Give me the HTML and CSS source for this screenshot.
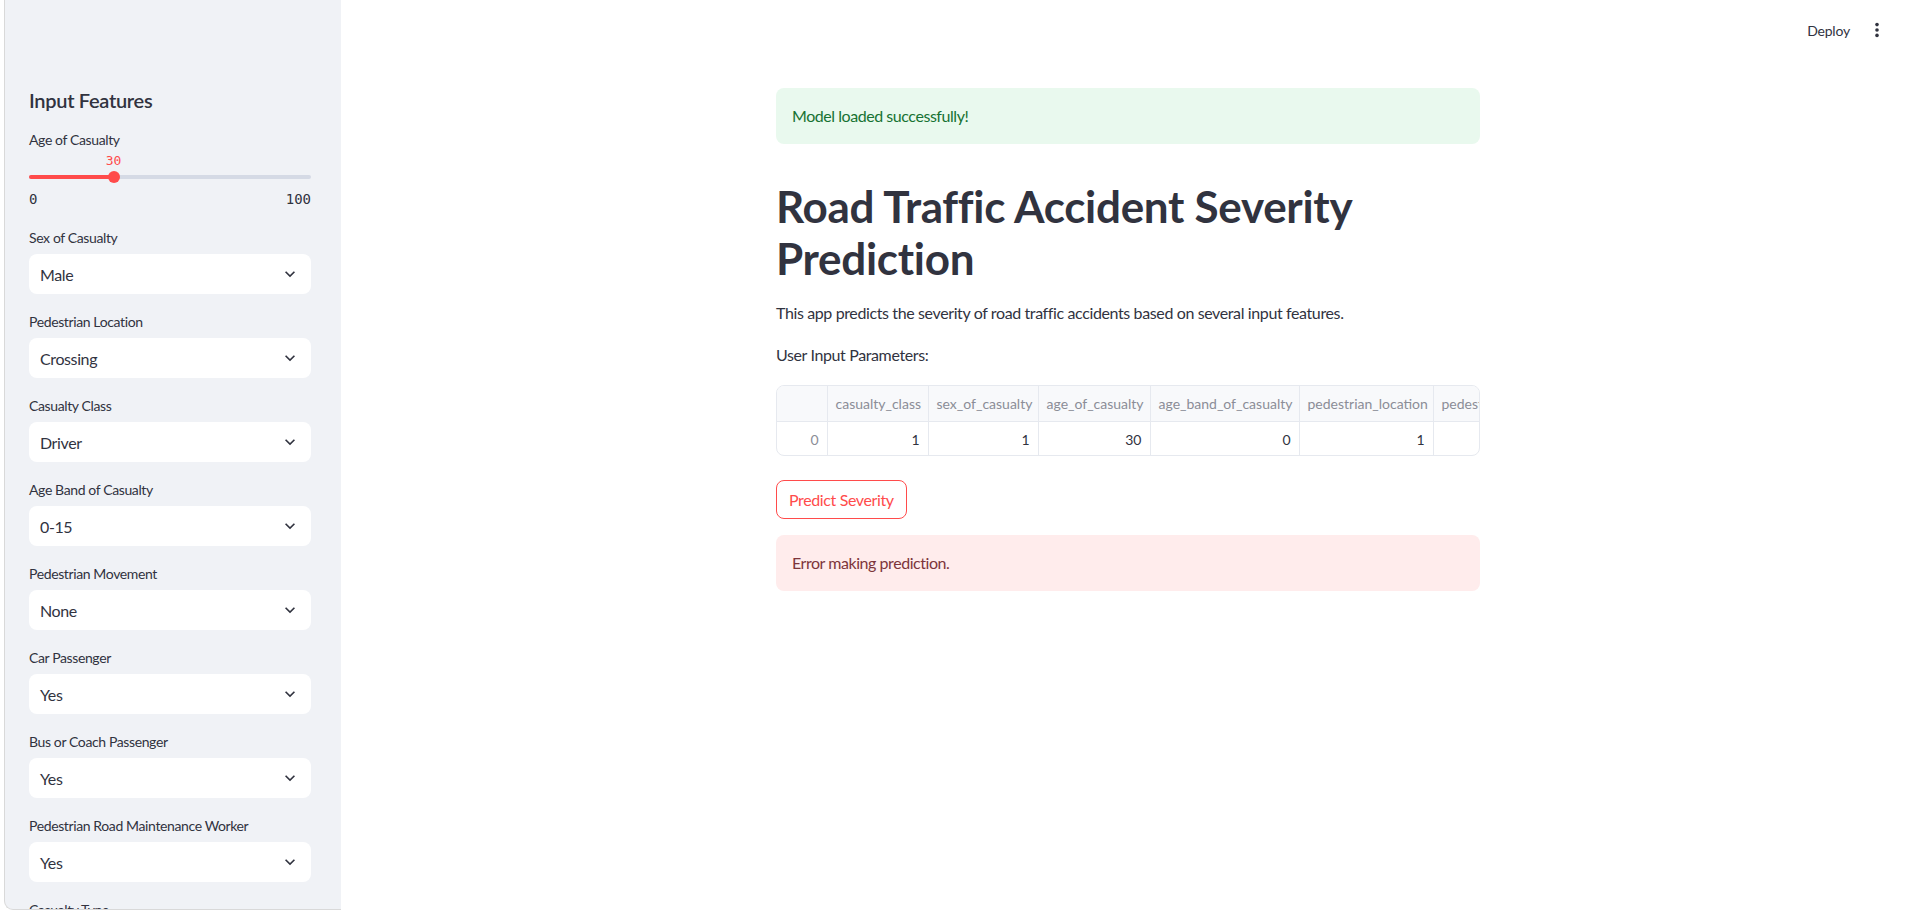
FILE: index.html
```html
<!DOCTYPE html>
<html lang="en">
<head>
<meta charset="utf-8">
<title>Road Traffic Accident Severity Prediction</title>
<link rel="stylesheet" href="styles.css">
</head>
<body>
<div class="app">
  <aside class="sidebar">
    <h2 class="sb-title">Input Features</h2>

    <div class="widget">
      <div class="wlabel">Age of Casualty</div>
      <div class="slider">
        <div class="slider-value" style="left:30%">30</div>
        <div class="slider-row">
          <div class="track">
            <div class="track-fill" style="width:30%"></div>
            <div class="thumb" style="left:30%"></div>
          </div>
        </div>
        <div class="slider-ticks"><span>0</span><span>100</span></div>
      </div>
    </div>

    <div class="widget">
      <div class="wlabel">Sex of Casualty</div>
      <div class="select"><span>Male</span><svg class="chev" viewBox="0 0 24 24"><path d="M16.59 8.59L12 13.17 7.41 8.59 6 10l6 6 6-6z"/></svg></div>
    </div>
    <div class="widget">
      <div class="wlabel">Pedestrian Location</div>
      <div class="select"><span>Crossing</span><svg class="chev" viewBox="0 0 24 24"><path d="M16.59 8.59L12 13.17 7.41 8.59 6 10l6 6 6-6z"/></svg></div>
    </div>
    <div class="widget">
      <div class="wlabel">Casualty Class</div>
      <div class="select"><span>Driver</span><svg class="chev" viewBox="0 0 24 24"><path d="M16.59 8.59L12 13.17 7.41 8.59 6 10l6 6 6-6z"/></svg></div>
    </div>
    <div class="widget">
      <div class="wlabel">Age Band of Casualty</div>
      <div class="select"><span>0-15</span><svg class="chev" viewBox="0 0 24 24"><path d="M16.59 8.59L12 13.17 7.41 8.59 6 10l6 6 6-6z"/></svg></div>
    </div>
    <div class="widget">
      <div class="wlabel">Pedestrian Movement</div>
      <div class="select"><span>None</span><svg class="chev" viewBox="0 0 24 24"><path d="M16.59 8.59L12 13.17 7.41 8.59 6 10l6 6 6-6z"/></svg></div>
    </div>
    <div class="widget">
      <div class="wlabel">Car Passenger</div>
      <div class="select"><span>Yes</span><svg class="chev" viewBox="0 0 24 24"><path d="M16.59 8.59L12 13.17 7.41 8.59 6 10l6 6 6-6z"/></svg></div>
    </div>
    <div class="widget">
      <div class="wlabel">Bus or Coach Passenger</div>
      <div class="select"><span>Yes</span><svg class="chev" viewBox="0 0 24 24"><path d="M16.59 8.59L12 13.17 7.41 8.59 6 10l6 6 6-6z"/></svg></div>
    </div>
    <div class="widget">
      <div class="wlabel">Pedestrian Road Maintenance Worker</div>
      <div class="select"><span>Yes</span><svg class="chev" viewBox="0 0 24 24"><path d="M16.59 8.59L12 13.17 7.41 8.59 6 10l6 6 6-6z"/></svg></div>
    </div>
    <div class="widget">
      <div class="wlabel">Casualty Type</div>
      <div class="select"><span>Driver or rider</span><svg class="chev" viewBox="0 0 24 24"><path d="M16.59 8.59L12 13.17 7.41 8.59 6 10l6 6 6-6z"/></svg></div>
    </div>
  </aside>

  <main class="main">
    <header class="topbar">
      <button class="deploy">Deploy</button>
      <button class="kebab" aria-label="Main menu">
        <svg viewBox="0 0 16 16" width="16" height="16"><circle cx="8" cy="2.6" r="1.8"/><circle cx="8" cy="8" r="1.8"/><circle cx="8" cy="13.4" r="1.8"/></svg>
      </button>
    </header>

    <div class="block">
      <div class="alert success">Model loaded successfully!</div>

      <h1 class="title">Road Traffic Accident Severity<br>Prediction</h1>

      <p class="text">This app predicts the severity of road traffic accidents based on several input features.</p>
      <p class="text">User Input Parameters:</p>

      <div class="df">
        <table>
          <colgroup>
            <col class="c-idx"><col class="c1"><col class="c2"><col class="c3"><col class="c4"><col class="c5"><col class="c6"><col class="c7">
          </colgroup>
          <thead>
            <tr><th></th><th>casualty_class</th><th>sex_of_casualty</th><th>age_of_casualty</th><th>age_band_of_casualty</th><th>pedestrian_location</th><th class="left">pedestrian_movement</th><th class="left">car_passenger</th></tr>
          </thead>
          <tbody>
            <tr><td class="idx">0</td><td>1</td><td>1</td><td>30</td><td>0</td><td>1</td><td>0</td><td>1</td></tr>
          </tbody>
        </table>
      </div>

      <div class="btn-row"><button class="btn">Predict Severity</button></div>

      <div class="alert error">Error making prediction.</div>
    </div>
  </main>
</div>
</body>
</html>
```

FILE: styles.css
```css
html, body {
  margin: 0;
  padding: 0;
  background: #ffffff;
}

body {
  font-family: Lato, "Noto Sans", "Liberation Sans", sans-serif;
  color: #31333f;
  letter-spacing: -0.38px;
  overflow: hidden;
}

.app {
  display: flex;
  height: 912px;
  padding-left: 4px;
}

/* ---------- Sidebar ---------- */
.sidebar {
  width: 337px;
  height: 910px;
  flex: none;
  box-sizing: border-box;
  background: #f0f2f6;
  border-left: 1px solid #d9d9d9;
  border-bottom: 1px solid #d9d9d9;
  border-bottom-left-radius: 9px;
  padding: 88px 30px 0 24px;
  display: flex;
  flex-direction: column;
  gap: 16px;
  overflow: hidden;
}

.sb-title {
  margin: 0;
  font-size: 20px;
  line-height: 24px;
  font-weight: 600;
  color: #31333f;
  letter-spacing: -0.3px;
}

.widget {
  display: flex;
  flex-direction: column;
  flex: none;
}

.wlabel {
  font-size: 14px;
  line-height: 24px;
  height: 24px;
  margin-bottom: 4px;
  color: #31333f;
}

.slider {
  position: relative;
  height: 54px;
  padding-top: 16px;
  box-sizing: border-box;
}

.slider-value {
  position: absolute;
  top: -3px;
  transform: translateX(-50%);
  font-family: "DejaVu Sans Mono", "Liberation Mono", monospace;
  font-size: 13px;
  line-height: 16px;
  letter-spacing: 0;
  color: #ff4b4b;
}

.slider-row {
  height: 10px;
  display: flex;
  align-items: center;
}

.track {
  position: relative;
  width: 100%;
  height: 4px;
  border-radius: 4px;
  background: #d5dae5;
}

.track-fill {
  height: 100%;
  border-radius: 4px;
  background: #ff4b4b;
}

.thumb {
  position: absolute;
  top: 50%;
  width: 12px;
  height: 12px;
  border-radius: 50%;
  background: #ff4b4b;
  transform: translate(-50%, -50%);
}

.slider-ticks {
  display: flex;
  justify-content: space-between;
  margin-top: 7px;
  font-family: "DejaVu Sans Mono", "Liberation Mono", monospace;
  font-size: 14px;
  line-height: 20px;
  letter-spacing: 0;
  color: #31333f;
}

.select {
  height: 40px;
  box-sizing: border-box;
  background: #ffffff;
  border-radius: 8px;
  display: flex;
  align-items: center;
  justify-content: space-between;
  padding: 0 11px 0 11px;
  font-size: 16px;
  color: #31333f;
}

.chev {
  width: 20px;
  height: 20px;
  fill: #31333f;
  flex: none;
}

/* ---------- Main ---------- */
.main {
  flex: 1;
  display: flex;
  flex-direction: column;
  padding-right: 3px;
  min-width: 0;
}

.topbar {
  height: 60px;
  flex: none;
  display: flex;
  align-items: center;
  justify-content: flex-end;
  gap: 19px;
  padding-right: 30px;
}

.deploy {
  background: none;
  border: none;
  padding: 0;
  font-family: inherit;
  font-size: 14px;
  letter-spacing: -0.2px;
  color: #31333f;
  cursor: pointer;
}

.kebab {
  background: none;
  border: none;
  padding: 0;
  width: 16px;
  height: 16px;
  display: flex;
  align-items: center;
  justify-content: center;
  cursor: pointer;
}

.kebab svg {
  fill: #31333f;
}

.block {
  width: 704px;
  margin: 0 auto;
  padding-top: 28px;
  display: flex;
  flex-direction: column;
  gap: 16px;
}

.alert {
  border-radius: 8px;
  padding: 16px;
  font-size: 16px;
  line-height: 24px;
  letter-spacing: -0.45px;
}

.alert.success {
  background: #e9f9ee;
  color: #177233;
}

.alert.error {
  background: #ffecec;
  color: #7d353b;
}

.title {
  margin: 0;
  padding-top: 20px;
  font-size: 44px;
  line-height: 52px;
  font-weight: 700;
  color: #31333f;
  letter-spacing: -0.3px;
}

.text {
  margin: 0;
  font-size: 16px;
  line-height: 25.6px;
  color: #31333f;
}

.df {
  width: 704px;
  height: 71px;
  box-sizing: border-box;
  border: 1px solid #e6e9ef;
  border-radius: 8px;
  overflow: hidden;
  margin-top: 2px;
  margin-bottom: 8px;
}

.df table {
  border-collapse: collapse;
  table-layout: fixed;
  width: 851px;
  font-size: 14px;
  letter-spacing: 0;
}

.c-idx { width: 50px; }
.c1 { width: 101px; }
.c2 { width: 110px; }
.c3 { width: 112px; }
.c4 { width: 149px; }
.c5 { width: 134px; }
.c6 { width: 150px; }
.c7 { width: 45px; }

.df th,
.df td {
  border-right: 1px solid #e6e9ef;
  padding: 0 8px;
  text-align: right;
  white-space: nowrap;
  overflow: hidden;
}

.df th {
  height: 35px;
  background: #f8f9fb;
  color: #8b8d97;
  font-weight: 400;
  border-bottom: 1px solid #e6e9ef;
}

.df th.left {
  text-align: left;
}

.df td {
  height: 34px;
  color: #31333f;
}

.df td.idx {
  color: #8b8d97;
}

.btn-row {
  display: flex;
}

.btn {
  height: 39px;
  padding: 0 12px;
  background: #ffffff;
  border: 1px solid #ff4b4b;
  border-radius: 8px;
  color: #ff4b4b;
  font-family: inherit;
  font-size: 16px;
  letter-spacing: -0.38px;
  cursor: pointer;
}
```
